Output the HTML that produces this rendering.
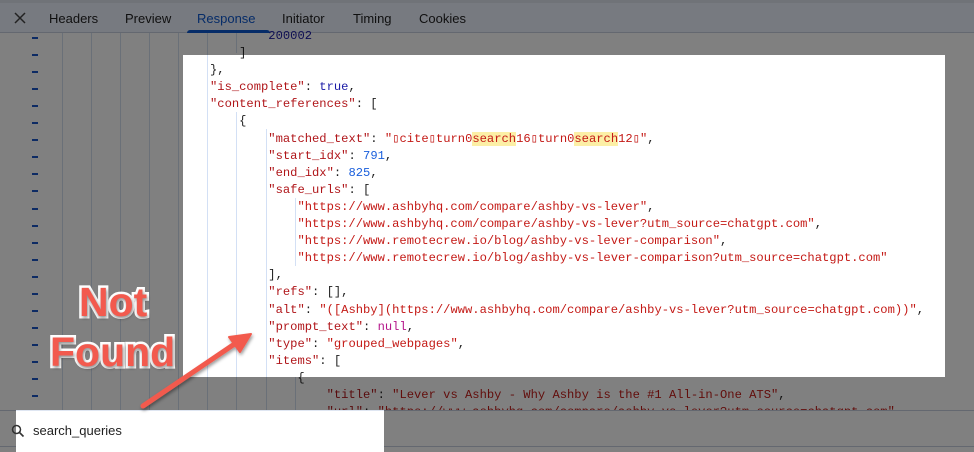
<!DOCTYPE html>
<html><head><meta charset="utf-8"><style>
*{margin:0;padding:0;box-sizing:border-box}
html,body{width:974px;height:452px;overflow:hidden;background:#808080}
#root{position:absolute;left:0;top:0;width:974px;height:452px;overflow:hidden;background:#808080;font-family:"Liberation Sans",sans-serif}
.tabs{position:absolute;left:0;top:0;width:974px;height:33px;background:#777a80;border-top:3px solid #707378;border-bottom:1px solid #646870}
.tab{position:absolute;top:8px;font-size:13px;color:#101010}
.code{position:absolute;left:210px;top:28px;font-family:"Liberation Mono",monospace;font-size:12.15px;line-height:17.1px;white-space:pre;color:#1f1f1f}
.k{color:#b0161a}.s{color:#c41a16}.b{color:#1a1aa6}.n{color:#1a5fdc}.nl{color:#b5168a}.h{background:#fcefa6}
.dim{color:#101010}.dim .k{color:#580b0d}.dim .s{color:#620d0b}.dim .b{color:#0d0d53}
.vl{position:absolute;width:1px;background:#d3e0f5}
.dl{position:absolute;width:1px;background:#6a7078}
.d{position:absolute;left:32px;width:6px;height:1.5px;background:#0d2b64}
.hl{position:absolute;left:183px;top:55px;width:762px;height:322px;overflow:hidden;background:#fff}
.hl .inner{position:absolute;left:-183px;top:-55px;width:974px;height:452px}
.bar{position:absolute;left:0;top:410px;width:974px;height:37px;border-top:1px solid #646870;border-bottom:1px solid #646870;background:#808080}
.search{position:absolute;left:16px;top:410px;width:368px;height:42px;background:#fff;border-top:1px solid #dfe6f2}
.search span{position:absolute;left:17px;top:12px;font-size:13px;color:#1f1f1f}
.ann{position:absolute;font-weight:bold;font-size:41px;color:#f25a4e;-webkit-text-stroke:5px #fff;paint-order:stroke fill;text-shadow:1px 2px 3px rgba(0,0,0,.45);font-family:"Liberation Sans",sans-serif;line-height:1}
</style></head><body><div id="root">
<div class="tabs">
<svg style="position:absolute;left:13px;top:8px" width="14" height="14"><path d="M2 2L12 12M12 2L2 12" stroke="#222" stroke-width="1.5"/></svg>
<div class="tab" style="left:49px">Headers</div>
<div class="tab" style="left:125px">Preview</div>
<div class="tab" style="left:197px;color:#062c68">Response</div>
<div class="tab" style="left:282px">Initiator</div>
<div class="tab" style="left:353px">Timing</div>
<div class="tab" style="left:419px">Cookies</div>
<div style="position:absolute;left:187px;top:27px;width:83px;height:3px;background:#062c68;border-radius:3px 3px 0 0"></div>
</div>
<div class="dl" style="left:62px;top:33px;height:377px"></div>
<div class="dl" style="left:91px;top:33px;height:377px"></div>
<div class="dl" style="left:120px;top:33px;height:377px"></div>
<div class="dl" style="left:149px;top:33px;height:377px"></div>
<div class="dl" style="left:178px;top:33px;height:377px"></div>
<div class="dl" style="left:207px;top:33px;height:377px"></div>
<div class="dl" style="left:236px;top:33px;height:20px"></div>
<div class="dl" style="left:236px;top:112px;height:298px"></div>
<div class="dl" style="left:266px;top:129px;height:281px"></div>
<div class="dl" style="left:295px;top:368px;height:42px"></div>
<div class="d" style="top:37px"></div><div class="d" style="top:54px"></div><div class="d" style="top:71px"></div><div class="d" style="top:88px"></div><div class="d" style="top:105px"></div><div class="d" style="top:122px"></div><div class="d" style="top:139px"></div><div class="d" style="top:156px"></div><div class="d" style="top:173px"></div><div class="d" style="top:190px"></div><div class="d" style="top:208px"></div><div class="d" style="top:225px"></div><div class="d" style="top:242px"></div><div class="d" style="top:259px"></div><div class="d" style="top:276px"></div><div class="d" style="top:293px"></div><div class="d" style="top:310px"></div><div class="d" style="top:327px"></div><div class="d" style="top:344px"></div><div class="d" style="top:361px"></div><div class="d" style="top:378px"></div><div class="d" style="top:395px"></div>
<div class="code dim">        <span class="b">200002</span>
    ]
},
<span class="k">"is_complete"</span>: <span class="b">true</span>,
<span class="k">"content_references"</span>: [
    {
        <span class="k">"matched_text"</span>: <span class="s">"▯cite▯turn0search16▯turn0search12▯"</span>,
        <span class="k">"start_idx"</span>: <span class="n">791</span>,
        <span class="k">"end_idx"</span>: <span class="n">825</span>,
        <span class="k">"safe_urls"</span>: [
            <span class="s">"https://www.ashbyhq.com/compare/ashby-vs-lever"</span>,
            <span class="s">"https://www.ashbyhq.com/compare/ashby-vs-lever?utm_source=chatgpt.com"</span>,
            <span class="s">"https://www.remotecrew.io/blog/ashby-vs-lever-comparison"</span>,
            <span class="s">"https://www.remotecrew.io/blog/ashby-vs-lever-comparison?utm_source=chatgpt.com"</span>
        ],
        <span class="k">"refs"</span>: [],
        <span class="k">"alt"</span>: <span class="s">"([Ashby](https://www.ashbyhq.com/compare/ashby-vs-lever?utm_source=chatgpt.com))"</span>,
        <span class="k">"prompt_text"</span>: <span class="nl">null</span>,
        <span class="k">"type"</span>: <span class="s">"grouped_webpages"</span>,
        <span class="k">"items"</span>: [
            {
                <span class="k">"title"</span>: <span class="s">"Lever vs Ashby - Why Ashby is the #1 All-in-One ATS"</span>,
                <span class="k">"url"</span>: <span class="s">"https://www.ashbyhq.com/compare/ashby-vs-lever?utm_source=chatgpt.com"</span>,</div>
<div class="bar"></div>
<div class="hl"><div class="inner">
<div class="vl" style="left:207px;top:33px;height:377px"></div>
<div class="vl" style="left:236px;top:112px;height:298px"></div>
<div class="vl" style="left:266px;top:129px;height:281px"></div>
<div class="vl" style="left:295px;top:198px;height:68px"></div>
<div class="code">        <span class="b">200002</span>
    ]
},
<span class="k">"is_complete"</span>: <span class="b">true</span>,
<span class="k">"content_references"</span>: [
    {
        <span class="k">"matched_text"</span>: <span class="s">"▯cite▯turn0<span class="h">search</span>16▯turn0<span class="h">search</span>12▯"</span>,
        <span class="k">"start_idx"</span>: <span class="n">791</span>,
        <span class="k">"end_idx"</span>: <span class="n">825</span>,
        <span class="k">"safe_urls"</span>: [
            <span class="s">"https://www.ashbyhq.com/compare/ashby-vs-lever"</span>,
            <span class="s">"https://www.ashbyhq.com/compare/ashby-vs-lever?utm_source=chatgpt.com"</span>,
            <span class="s">"https://www.remotecrew.io/blog/ashby-vs-lever-comparison"</span>,
            <span class="s">"https://www.remotecrew.io/blog/ashby-vs-lever-comparison?utm_source=chatgpt.com"</span>
        ],
        <span class="k">"refs"</span>: [],
        <span class="k">"alt"</span>: <span class="s">"([Ashby](https://www.ashbyhq.com/compare/ashby-vs-lever?utm_source=chatgpt.com))"</span>,
        <span class="k">"prompt_text"</span>: <span class="nl">null</span>,
        <span class="k">"type"</span>: <span class="s">"grouped_webpages"</span>,
        <span class="k">"items"</span>: [
            {</div>
</div></div>
<div class="search">
<svg style="position:absolute;left:-5px;top:13px" width="14" height="14"><circle cx="5.5" cy="5.5" r="4" fill="none" stroke="#333" stroke-width="1.5"/><path d="M8.5 8.5L12.5 12.5" stroke="#333" stroke-width="1.6"/></svg>
<span>search_queries</span></div>
<div class="ann" style="left:79px;top:282px">Not</div>
<div class="ann" style="left:50px;top:332px">Found</div>
<svg style="position:absolute;left:0;top:0" width="974" height="452"><defs><filter id="sh"><feDropShadow dx="1" dy="2" stdDeviation="1.5" flood-opacity=".4"/></filter></defs>
<g filter="url(#sh)" fill="#f25a4e" stroke="#f25a4e">
<path d="M143 406L236 343" stroke-width="5" stroke-linecap="round"/>
<path d="M251 334L229 337L240 352Z" stroke-width="2" stroke-linejoin="round"/></g></svg>
</div></body></html>
